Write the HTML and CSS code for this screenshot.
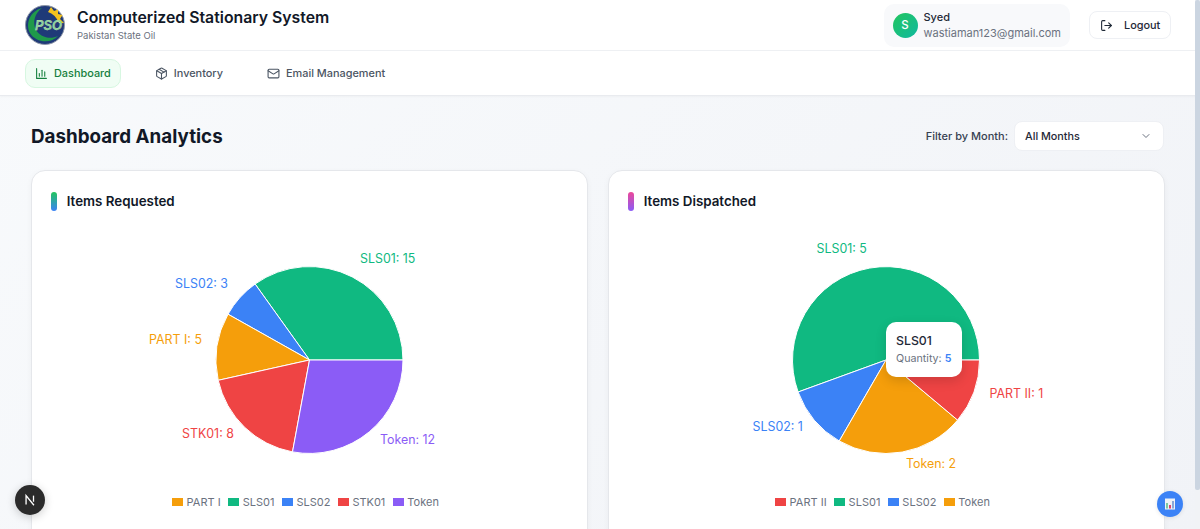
FILE: index.html
```html
<!DOCTYPE html>
<html lang="en">
<head>
<meta charset="utf-8">
<title>Computerized Stationary System</title>
<link rel="stylesheet" href="styles.css">
</head>
<body>
<header class="topbar">
  <div class="brand">
    <svg class="logo" viewBox="0 0 40 40" aria-hidden="true">
      <circle class="logo-disc" cx="20" cy="20" r="19.5"/>
      <path class="logo-sun" d="M23 7 L26 2 L29 6 L33 4.5 L33 9 L37.5 10 L35 14 L39 18 L34 18 Q30 9 23 7 Z"/>
      <path class="logo-moon" d="M17 3 C5 6 0 19 5 28 C11 38 26 39 33 31 C25 35 15 32 11 25 C7 17 10 8 17 3 Z"/>
      <text class="logo-text" x="10" y="25" textLength="27" lengthAdjust="spacingAndGlyphs">PSO</text>
    </svg>
    <div class="brand-text">
      <h1 class="brand-title">Computerized Stationary System</h1>
      <p class="brand-sub">Pakistan State Oil</p>
    </div>
  </div>
  <div class="account">
    <div class="user">
      <span class="avatar">S</span>
      <div class="user-text">
        <span class="user-name">Syed</span>
        <span class="user-mail">wastiaman123@gmail.com</span>
      </div>
    </div>
    <button class="logout" type="button">
      <svg class="icon" viewBox="0 0 24 24" aria-hidden="true"><path d="M9 21H5a2 2 0 0 1-2-2V5a2 2 0 0 1 2-2h4"/><path d="M16 17l5-5-5-5"/><path d="M21 12H9"/></svg>
      Logout
    </button>
  </div>
</header>
<nav class="tabs">
  <a class="tab tab-active">
    <svg class="icon" viewBox="0 0 24 24" aria-hidden="true"><path d="M3 3v18h18"/><path d="M8 17v-5"/><path d="M13 17V6"/><path d="M18 17v-8"/></svg>
    Dashboard
  </a>
  <a class="tab">
    <svg class="icon" viewBox="0 0 24 24" aria-hidden="true"><path d="M21 8a2 2 0 0 0-1-1.73l-7-4a2 2 0 0 0-2 0l-7 4A2 2 0 0 0 3 8v8a2 2 0 0 0 1 1.73l7 4a2 2 0 0 0 2 0l7-4A2 2 0 0 0 21 16Z"/><path d="M3.3 7 12 12l8.7-5"/><path d="M12 22V12"/><path d="M7.5 4.3l9 5.2"/></svg>
    Inventory
  </a>
  <a class="tab">
    <svg class="icon" viewBox="0 0 24 24" aria-hidden="true"><rect x="2" y="4" width="20" height="16" rx="2"/><path d="M22 7l-8.97 5.7a2 2 0 0 1-2.06 0L2 7"/></svg>
    Email Management
  </a>
</nav>
<main class="content">
  <div class="page-head">
    <h2 class="page-title">Dashboard Analytics</h2>
    <div class="filter">
      <span class="filter-label">Filter by Month:</span>
      <div class="select">
        <span>All Months</span>
        <svg class="chev" viewBox="0 0 24 24" aria-hidden="true"><path d="M6 9l6 6 6-6"/></svg>
      </div>
    </div>
  </div>
  <div class="cards">
    <section class="card">
      <h3 class="card-title"><span class="mark mark-req"></span>Items Requested</h3>
      <svg class="pie" viewBox="32.5 225 555 260">
        <path class="slice c-green" d="M310 360 L403.5 360 A93.5 93.5 0 0 0 255.6 284 Z"/>
        <path class="slice c-blue" d="M310 360 L255.6 284 A93.5 93.5 0 0 0 228.5 314.2 Z"/>
        <path class="slice c-amber" d="M310 360 L228.5 314.2 A93.5 93.5 0 0 0 218.7 380.3 Z"/>
        <path class="slice c-red" d="M310 360 L218.7 380.3 A93.5 93.5 0 0 0 293 451.9 Z"/>
        <path class="slice c-violet" d="M310 360 L293 451.9 A93.5 93.5 0 0 0 403.5 360 Z"/>
        <text class="lbl t-green" x="360.5" y="263">SLS01: 15</text>
        <text class="lbl t-blue" x="175.5" y="288">SLS02: 3</text>
        <text class="lbl t-amber" x="149.5" y="344">PART I: 5</text>
        <text class="lbl t-red" x="182.5" y="438">STK01: 8</text>
        <text class="lbl t-violet" x="380.5" y="444">Token: 12</text>
      </svg>
      <ul class="legend">
        <li><i class="swatch c-bg-amber"></i>PART I</li>
        <li><i class="swatch c-bg-green"></i>SLS01</li>
        <li><i class="swatch c-bg-blue"></i>SLS02</li>
        <li><i class="swatch c-bg-red"></i>STK01</li>
        <li><i class="swatch c-bg-violet"></i>Token</li>
      </ul>
    </section>
    <section class="card">
      <h3 class="card-title"><span class="mark mark-dis"></span>Items Dispatched</h3>
      <svg class="pie" viewBox="609 225 555 260">
        <path class="slice c-green" d="M886 360 L979.5 360 A93.5 93.5 0 1 0 798.1 392 Z"/>
        <path class="slice c-blue" d="M886 360 L798.1 392 A93.5 93.5 0 0 0 839.25 441 Z"/>
        <path class="slice c-amber" d="M886 360 L839.25 441 A93.5 93.5 0 0 0 957.6 420.1 Z"/>
        <path class="slice c-red" d="M886 360 L957.6 420.1 A93.5 93.5 0 0 0 979.5 360 Z"/>
        <text class="lbl t-green" x="816.5" y="252.5">SLS01: 5</text>
        <text class="lbl t-blue" x="752.5" y="431">SLS02: 1</text>
        <text class="lbl t-amber" x="906" y="468">Token: 2</text>
        <text class="lbl t-red" x="989.5" y="397.5">PART II: 1</text>
      </svg>
      <ul class="legend">
        <li><i class="swatch c-bg-red"></i>PART II</li>
        <li><i class="swatch c-bg-green"></i>SLS01</li>
        <li><i class="swatch c-bg-blue"></i>SLS02</li>
        <li><i class="swatch c-bg-amber"></i>Token</li>
      </ul>
      <div class="tooltip">
        <div class="tip-name">SLS01</div>
        <div class="tip-qty">Quantity: <b>5</b></div>
      </div>
    </section>
  </div>
</main>
<div class="next-badge"><svg viewBox="0 0 16 16" aria-hidden="true"><path d="M3.5 13V3L12.5 14"/><path d="M12 3v7"/></svg></div>
<div class="stats-badge"><svg viewBox="0 0 12 12" aria-hidden="true"><rect class="s-bg" x="1" y="0.5" width="10" height="11"/><rect class="s-g" x="2" y="5" width="2" height="5.5"/><rect class="s-r" x="5" y="7" width="2" height="3.5"/><rect class="s-b" x="8" y="3" width="2" height="7.5"/></svg></div>
<div class="scrollbar"><div class="thumb"></div></div>
</body>
</html>
```

FILE: styles.css
```css
* { box-sizing: border-box; }
html, body { margin: 0; height: 100%; overflow: hidden; }
body {
  font-family: Inter, "Liberation Sans", sans-serif;
  background: linear-gradient(135deg, #f8fafc, #f1f3f7);
  color: #111827;
  padding-right: 4px;
}
.icon { width: 13px; height: 13px; fill: none; stroke: currentColor; stroke-width: 2; stroke-linecap: round; stroke-linejoin: round; flex: none; }

.topbar {
  height: 51px;
  background: #fff;
  border-bottom: 1px solid #eef0f3;
  display: flex;
  align-items: center;
  justify-content: space-between;
  padding: 0 25px;
}
.brand { display: flex; align-items: center; gap: 12px; }
.logo { width: 40px; height: 40px; display: block; }
.logo-disc { fill: #1f3a78; stroke: #8f98a8; stroke-width: 1; }
.logo-sun { fill: #f4c21f; }
.logo-moon { fill: #1f9a4a; }
.logo-text { font: italic 700 14px "Liberation Sans", sans-serif; fill: #7fd3a0; stroke: #f1ecb0; stroke-width: .25; }
.brand-title { margin: 0; font-size: 15.8px; line-height: 20px; font-weight: 600; color: #111827; }
.brand-sub { margin: 2px 0 0; font-size: 9.5px; line-height: 12px; color: #6b7280; }

.account { display: flex; align-items: center; gap: 19px; }
.user { display: flex; align-items: center; gap: 6px; height: 43px; padding: 0 9px; background: #f8f9fb; border-radius: 10px; }
.avatar { width: 25px; height: 25px; border-radius: 50%; background: linear-gradient(135deg, #22c55e, #10b9a0); color: #fff; font-size: 11.5px; font-weight: 500; display: flex; align-items: center; justify-content: center; }
.user-text { display: flex; flex-direction: column; }
.user-name { font-size: 11px; line-height: 15px; font-weight: 500; color: #1f2937; }
.user-mail { font-size: 11px; line-height: 16px; color: #6b7280; }
.logout { height: 28px; width: 82px; padding: 0 10px; background: #fff; border: 1px solid #eef0f4; border-radius: 8px; display: flex; align-items: center; gap: 11px; font: 500 10.9px Inter, sans-serif; color: #1f2937; }

.tabs { height: 45px; background: #fff; border-bottom: 1px solid #e9ebef; display: flex; align-items: center; gap: 24px; padding: 0 25px; box-shadow: 0 1px 2px rgba(0,0,0,.03); }
.tab { height: 29px; display: flex; align-items: center; gap: 6px; padding: 0 9px; font-size: 10.9px; font-weight: 500; color: #4b5563; border: 1px solid transparent; border-radius: 10px; }
.tab-active { color: #15803d; background: #f0fdf4; border-color: #d7f7e1; }

.content { padding: 24px 32px 0 31px; }
.page-head { display: flex; align-items: center; justify-content: space-between; height: 31px; padding-top: 1px; margin-bottom: 19px; }
.page-title { margin: 0; font-size: 18.8px; font-weight: 700; color: #111827; }
.filter { display: flex; align-items: center; gap: 6px; }
.filter-label { font-size: 11px; font-weight: 500; color: #374151; }
.select { width: 150px; height: 30px; padding: 0 11px 0 10px; background: #fff; border: 1px solid #eef0f4; border-radius: 8px; display: flex; align-items: center; justify-content: space-between; font-size: 10.8px; font-weight: 500; color: #1f2937; }
.chev { width: 12px; height: 12px; fill: none; stroke: #6b7280; stroke-width: 2; stroke-linecap: round; stroke-linejoin: round; }

.cards { display: grid; grid-template-columns: 1fr 1fr; gap: 20px; }
.card { position: relative; height: 400px; background: #fff; border: 1px solid #e5e7eb; border-radius: 14px; padding: 20px 0 0; box-shadow: 0 2px 6px rgba(0,0,0,.04); }
.card-title { margin: 0; padding-left: 19px; height: 20px; display: flex; align-items: center; gap: 9.7px; font-size: 13.35px; font-weight: 600; color: #111827; }
.mark { width: 6px; height: 19px; border-radius: 3px; }
.mark-req { background: linear-gradient(180deg, #22c55e, #3b82f6); }
.mark-dis { background: linear-gradient(180deg, #ec4899, #8b5cf6); }
.pie { display: block; width: 555px; height: 260px; margin-top: 14px; }
.slice { stroke: #fff; stroke-width: 1; }
.c-green { fill: #10b981; } .c-blue { fill: #3b82f6; } .c-amber { fill: #f59e0b; } .c-red { fill: #ef4444; } .c-violet { fill: #8b5cf6; }
.lbl { font-size: 12.4px; font-weight: 400; }
.t-green { fill: #10b981; } .t-blue { fill: #3b82f6; } .t-amber { fill: #f59e0b; } .t-red { fill: #ef4444; } .t-violet { fill: #8b5cf6; }

.legend { list-style: none; margin: 9px 0 0; padding: 0 8px 0 0; display: flex; justify-content: center; gap: 7.5px; font-size: 11px; color: #6b7280; }
.legend li { display: flex; align-items: center; gap: 3.5px; line-height: 16px; }
.swatch { width: 11px; height: 8px; }
.c-bg-green { background: #10b981; } .c-bg-blue { background: #3b82f6; } .c-bg-amber { background: #f59e0b; } .c-bg-red { background: #ef4444; } .c-bg-violet { background: #8b5cf6; }

.tooltip { position: absolute; left: 277px; top: 151px; width: 76px; height: 55px; padding: 11px 10px 0; background: #fff; border-radius: 10px; box-shadow: 0 4px 12px rgba(0,0,0,.14); }
.tip-name { font-size: 12.3px; line-height: 16px; font-weight: 500; color: #1f2937; }
.tip-qty { margin-top: 3px; font-size: 10.7px; line-height: 14px; color: #6b7280; white-space: nowrap; }
.tip-qty b { color: #3b82f6; font-weight: 600; }

.next-badge { position: fixed; left: 15px; top: 485px; width: 30px; height: 30px; border-radius: 50%; background: #2b2b2b; box-shadow: 0 2px 10px rgba(0,0,0,.2); display: flex; align-items: center; justify-content: center; }
.next-badge svg { width: 14px; height: 14px; fill: none; stroke: #fff; stroke-width: 1.5; }
.stats-badge { position: fixed; left: 1157px; top: 491px; width: 26px; height: 26px; border-radius: 50%; background: #3b82f6; display: flex; align-items: center; justify-content: center; box-shadow: 0 1px 4px rgba(0,0,0,.1); }
.stats-badge svg { width: 12px; height: 12px; }
.s-bg { fill: #eef2f6; } .s-g { fill: #7dc9a3; } .s-r { fill: #e0446f; } .s-b { fill: #8aa8d6; }

.scrollbar { position: fixed; right: 0; top: 0; bottom: 0; width: 5px; background: #f1f3f6; }
.thumb { height: 490px; background: #cbd5e1; border-radius: 2px; }
```
